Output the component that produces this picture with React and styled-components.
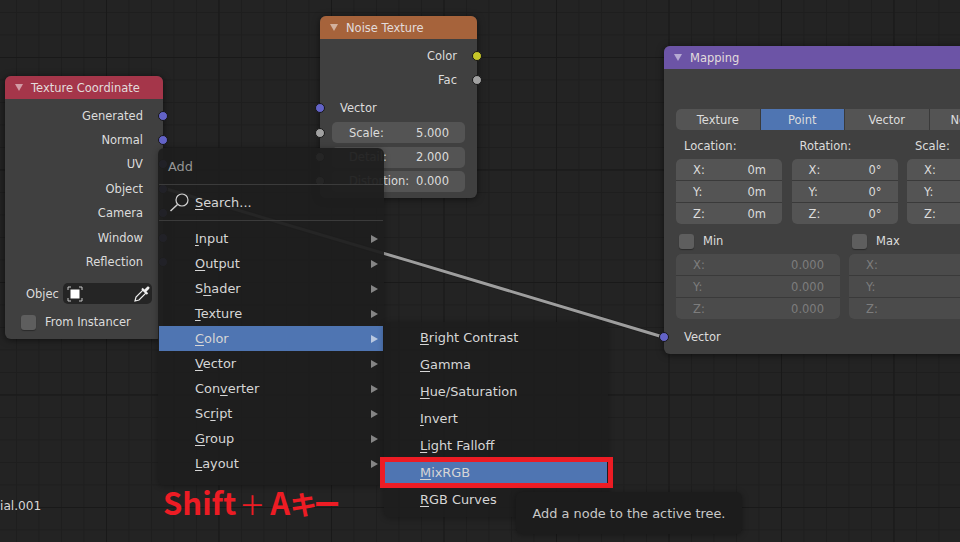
import React from "react";
import styled, { createGlobalStyle } from "styled-components";

const Global = createGlobalStyle`
html, body { margin: 0; padding: 0; background: #232323; }
`;

const Canvas = styled.div`
position: relative;
width: 960px;
height: 542px;
overflow: hidden;
font-family: "DejaVu Sans", sans-serif;
font-size: 11.5px;
color: #dcdcdc;
background-color: #232323;
background-image:
    linear-gradient(to right, #191919 1px, transparent 1px),
    linear-gradient(to bottom, #191919 1px, transparent 1px),
    linear-gradient(to right, #1e1e1e 1px, transparent 1px),
    linear-gradient(to bottom, #1e1e1e 1px, transparent 1px);
background-size: 112.5px 112.5px, 112.5px 112.5px, 22.5px 22.5px, 22.5px 22.5px;
background-position: 106px 0, 0 57px, 16px 0, 0 12px;
`;

const Wire = styled.svg`
position: absolute;
left: 0;
top: 0;
`;

const Node = styled.section`
position: absolute;
left: ${(p) => p.$x}px;
top: ${(p) => p.$y}px;
width: ${(p) => p.$w}px;
height: ${(p) => p.$h}px;
border-radius: 6px;
background: rgba(66, 66, 66, 0.96);
box-shadow: 0 1px 7px rgba(0, 0, 0, 0.55);
`;

const Header = styled.header`
display: flex;
align-items: center;
gap: 8px;
height: 23px;
padding-left: 10px;
border-radius: 6px 6px 0 0;
background: ${(p) => p.$color};
color: #e2dcdc;
`;

const Caret = styled.span`
width: 0;
height: 0;
border-left: 4px solid transparent;
border-right: 4px solid transparent;
border-top: 7px solid rgba(255, 255, 255, 0.5);
`;

const Body = styled.div`
display: flex;
flex-direction: column;
padding-top: ${(p) => p.$top || 0}px;
`;

const Row = styled.div`
position: relative;
display: flex;
align-items: center;
justify-content: ${(p) => (p.$right ? "flex-end" : "flex-start")};
flex: none;
height: ${(p) => p.$h || 24.4}px;
margin-top: ${(p) => p.$gap || 0}px;
padding: 0 ${(p) => (p.$right ? 20 : p.$pad ?? 20)}px 0 ${(p) => p.$pad ?? 20}px;
box-sizing: border-box;
`;

const Socket = styled.span`
position: absolute;
top: 50%;
${(p) => (p.$out ? "right: -5px;" : "left: -5px;")}
width: 8px;
height: 8px;
margin-top: -5px;
border-radius: 50%;
border: 1px solid #161616;
background: ${(p) => p.$color};
`;

const Field = styled.div`
flex: ${(p) => (p.$flat ? "none" : "1")};
display: flex;
align-items: center;
justify-content: space-between;
height: 21px;
padding: 0 16px 0 17px;
border-radius: ${(p) => (p.$flat ? "0" : "5px")};
background: ${(p) => (p.$off ? "#4b4b4b" : "#545454")};
color: ${(p) => (p.$off ? "#7d7d7d" : "#dcdcdc")};
`;

const Stack = styled.div`
display: flex;
flex-direction: column;
gap: 1px;
border-radius: 5px;
overflow: hidden;
background: #3a3a3a;
`;

const ObjectLabel = styled.span`
margin-left: 10px;
`;

const ObjectField = styled.div`
flex: 1;
display: flex;
align-items: center;
justify-content: space-between;
height: 21px;
margin-left: 4px;
padding: 0 1px 0 4px;
border-radius: 5px;
background: #252525;
`;

const Check = styled.span`
flex: none;
width: 15px;
height: 15px;
border-radius: 3px;
background: #5e5e5e;
box-shadow: 0 1px 1px rgba(0, 0, 0, 0.35);
`;

const CheckRow = styled.div`
display: flex;
align-items: center;
gap: ${(p) => p.$gap}px;
box-sizing: border-box;
padding: ${(p) => p.$top}px 0 0 ${(p) => p.$left}px;
height: ${(p) => p.$h}px;
`;

const Mapping = styled.div`
display: flex;
flex-direction: column;
width: 337px;
padding: 40px 0 0 12px;
`;

const Tabs = styled.div`
display: grid;
grid-template-columns: repeat(4, 1fr);
gap: 1px;
height: 21px;
border-radius: 5px;
overflow: hidden;
background: #3a3a3a;
`;

const Tab = styled.div`
display: flex;
align-items: center;
justify-content: center;
background: ${(p) => (p.$on ? "#4f75b2" : "#545454")};
`;

const Columns = styled.div`
display: grid;
grid-template-columns: repeat(${(p) => p.$n}, 1fr);
column-gap: ${(p) => p.$gap}px;
`;

const ColumnTitle = styled.div`
display: flex;
align-items: center;
box-sizing: border-box;
height: 29px;
padding: 3px 0 0 8px;
`;

const Menu = styled.nav`
position: absolute;
left: ${(p) => p.$x}px;
top: ${(p) => p.$y}px;
width: ${(p) => p.$w}px;
height: ${(p) => p.$h}px;
border-radius: 6px;
box-sizing: border-box;
padding: ${(p) => p.$top || 0}px 1px 0;
background: rgba(30, 30, 30, 0.945);
box-shadow: 0 1px 6px rgba(0, 0, 0, 0.3);
font-size: 12.9px;
color: #d6d6d6;
`;

const MenuTitle = styled.div`
display: flex;
align-items: center;
height: 36px;
padding-left: 9px;
color: #959595;
`;

const Separator = styled.div`
height: 1px;
margin-bottom: ${(p) => p.$after || 0}px;
background: #3b3b3b;
`;

const MenuItem = styled.div`
position: relative;
display: flex;
align-items: center;
height: ${(p) => p.$h}px;
padding-left: ${(p) => p.$left}px;
background: ${(p) => (p.$on ? "#4f75b2" : "transparent")};
`;

const SearchIcon = styled.svg`
position: absolute;
left: 9px;
top: 4px;
`;

const Hot = styled.span`
text-decoration: underline;
text-underline-offset: 2px;
text-decoration-thickness: 1px;
`;

const Arrow = styled.span`
position: absolute;
right: 5px;
top: 50%;
margin-top: -4px;
width: 0;
height: 0;
border-top: 4px solid transparent;
border-bottom: 4px solid transparent;
border-left: 7px solid ${(p) => (p.$on ? "#b9c8e0" : "#858585")};
`;

const Marker = styled.div`
position: absolute;
left: 380px;
top: 457px;
width: 233px;
height: 31px;
box-sizing: border-box;
border: 5px solid #ed1c24;
`;

const Tooltip = styled.div`
position: absolute;
left: 516px;
top: 492px;
width: 226px;
height: 42px;
display: flex;
align-items: center;
justify-content: center;
border-radius: 6px;
background: #1c1c1c;
box-shadow: 0 1px 6px rgba(0, 0, 0, 0.35);
font-size: 12.9px;
color: #c8c8c8;
`;

const Caption = styled.div`
position: absolute;
left: 163px;
top: 482px;
line-height: 40px;
font-family: "Noto Sans CJK JP", "Noto Sans", sans-serif;
font-size: 31px;
font-weight: 700;
color: #ed1c24;
white-space: nowrap;
`;

const Plus = styled.span`
margin: 0 5px 0 3px;
font-size: 26px;
font-weight: 400;
`;

const Kana = styled.span`
font-size: 27px;
letter-spacing: -3.5px;
`;

const Cut = styled.div`
position: absolute;
left: 0;
top: 499px;
font-size: 12.2px;
color: #d8d8d8;
`;

const BLUE = "#6363c7";
const GREY = "#a1a1a1";

const coords = ["Generated", "Normal", "UV", "Object", "Camera", "Window", "Reflection"];
const noiseFields = [
    ["Scale:", "5.000"],
    ["Detail:", "2.000"],
    ["Distortion:", "0.000"],
];
const columns = [
    ["Location:", "0m"],
    ["Rotation:", "0°"],
    ["Scale:", "1.000"],
];
const mainMenu = [
    ["", "I", "nput"],
    ["", "O", "utput"],
    ["S", "h", "ader"],
    ["", "T", "exture"],
    ["", "C", "olor"],
    ["", "V", "ector"],
    ["Con", "v", "erter"],
    ["Sc", "r", "ipt"],
    ["", "G", "roup"],
    ["", "L", "ayout"],
];
const colorMenu = [
    ["", "B", "right Contrast"],
    ["", "G", "amma"],
    ["", "H", "ue/Saturation"],
    ["", "I", "nvert"],
    ["", "L", "ight Falloff"],
    ["", "M", "ixRGB"],
    ["", "R", "GB Curves"],
];

const Label = ({ parts }) => (
    <span>
        {parts[0]}
        <Hot>{parts[1]}</Hot>
        {parts[2]}
    </span>
);

const XYZ = ({ value, off }) => (
    <Stack>
        {["X:", "Y:", "Z:"].map((axis) => (
            <Field key={axis} $flat $off={off}>
                <span>{axis}</span>
                <span>{value}</span>
            </Field>
        ))}
    </Stack>
);

const App = () => (
    <Canvas>
        <Global />
        <Wire width="960" height="542">
            <path d="M163 188 C 300 228, 530 297, 663 337" fill="none" stroke="#1a1a1a" strokeOpacity=".5" strokeWidth="4.5" />
            <path d="M163 188 C 300 228, 530 297, 663 337" fill="none" stroke="#9e9e9e" strokeWidth="3" />
        </Wire>

        <Node $x={5} $y={76} $w={158} $h={263}>
            <Header $color="#a5364a">
                <Caret />
                Texture Coordinate
            </Header>
            <Body $top={4.5}>
                {coords.map((name) => (
                    <Row key={name} $right>
                        {name}
                        <Socket $out $color={BLUE} />
                    </Row>
                ))}
                <Row $h={21} $pad={11} $gap={9}>
                    <ObjectLabel>Objec</ObjectLabel>
                    <ObjectField>
                        <svg width="16" height="16" viewBox="0 0 16 16">
                            <rect x="3.5" y="3.5" width="9" height="9" fill="#fff" />
                            <path d="M1 4V1h3M12 1h3v3M15 12v3h-3M4 15H1v-3" fill="none" stroke="#c8c8c8" strokeWidth="1" />
                        </svg>
                        <svg width="17" height="17" viewBox="0 0 17 17">
                            <path d="M1 16l1-4 7-7 3 3-7 7z" fill="none" stroke="#eee" strokeWidth="1.2" />
                            <path d="M8 3.5L13.5 9" stroke="#eee" strokeWidth="2" />
                            <path d="M10 5l3-3c1.5-1.2 3.5.5 2 2l-3 3z" fill="#eee" />
                        </svg>
                    </ObjectField>
                </Row>
                <CheckRow $left={16} $gap={9} $h={33} $top={3}>
                    <Check />
                    From Instancer
                </CheckRow>
            </Body>
        </Node>

        <Node $x={320} $y={16} $w={157} $h={182}>
            <Header $color="#a6633b">
                <Caret />
                Noise Texture
            </Header>
            <Body $top={4.5}>
                <Row $right>
                    Color
                    <Socket $out $color="#c7c729" />
                </Row>
                <Row $right>
                    Fac
                    <Socket $out $color={GREY} />
                </Row>
                <Row $gap={3.8}>
                    Vector
                    <Socket $color={BLUE} />
                </Row>
                {noiseFields.map(([label, value]) => (
                    <Row key={label} $pad={12}>
                        <Socket $color={GREY} />
                        <Field>
                            <span>{label}</span>
                            <span>{value}</span>
                        </Field>
                    </Row>
                ))}
            </Body>
        </Node>

        <Node $x={664} $y={46} $w={360} $h={308}>
            <Header $color="#6c54a6">
                <Caret />
                Mapping
            </Header>
            <Mapping>
                <Tabs>
                    <Tab>Texture</Tab>
                    <Tab $on>Point</Tab>
                    <Tab>Vector</Tab>
                    <Tab>Normal</Tab>
                </Tabs>
                <Columns $n={3} $gap={9.5}>
                    {columns.map(([title, value]) => (
                        <div key={title}>
                            <ColumnTitle>{title}</ColumnTitle>
                            <XYZ value={value} />
                        </div>
                    ))}
                </Columns>
                <Columns $n={2} $gap={9}>
                    {["Min", "Max"].map((name) => (
                        <div key={name}>
                            <CheckRow $left={3} $gap={9} $h={30} $top={4}>
                                <Check />
                                {name}
                            </CheckRow>
                            <XYZ value="0.000" off />
                        </div>
                    ))}
                </Columns>
            </Mapping>
            <Row $gap={6}>
                Vector
                <Socket $color={BLUE} />
            </Row>
        </Node>

        <Cut>ial.001</Cut>

        <Menu $x={158} $y={148} $w={226} $h={337}>
            <MenuTitle>Add</MenuTitle>
            <Separator />
            <MenuItem $h={35} $left={36}>
                <SearchIcon width="24" height="24" viewBox="0 0 24 24">
                    <circle cx="14" cy="11" r="6" fill="none" stroke="#d0d0d0" strokeWidth="1.2" />
                    <path d="M9.5 15.5L2.5 22" stroke="#d0d0d0" strokeWidth="1.5" />
                </SearchIcon>
                <span>
                    <Hot>S</Hot>earch...
                </span>
            </MenuItem>
            <Separator $after={5} />
            {mainMenu.map((parts) => (
                <MenuItem key={parts.join("")} $h={25} $left={36} $on={parts[1] === "C"}>
                    <Label parts={parts} />
                    <Arrow $on={parts[1] === "C"} />
                </MenuItem>
            ))}
        </Menu>

        <Menu $x={384} $y={322} $w={224} $h={195} $top={2}>
            {colorMenu.map((parts) => (
                <MenuItem key={parts.join("")} $h={27} $left={35} $on={parts[1] === "M"}>
                    <Label parts={parts} />
                </MenuItem>
            ))}
        </Menu>
        <Marker />

        <Tooltip>Add a node to the active tree.</Tooltip>

        <Caption>
            Shift<Plus>＋</Plus>A<Kana>キー</Kana>
        </Caption>
    </Canvas>
);

export default App;
